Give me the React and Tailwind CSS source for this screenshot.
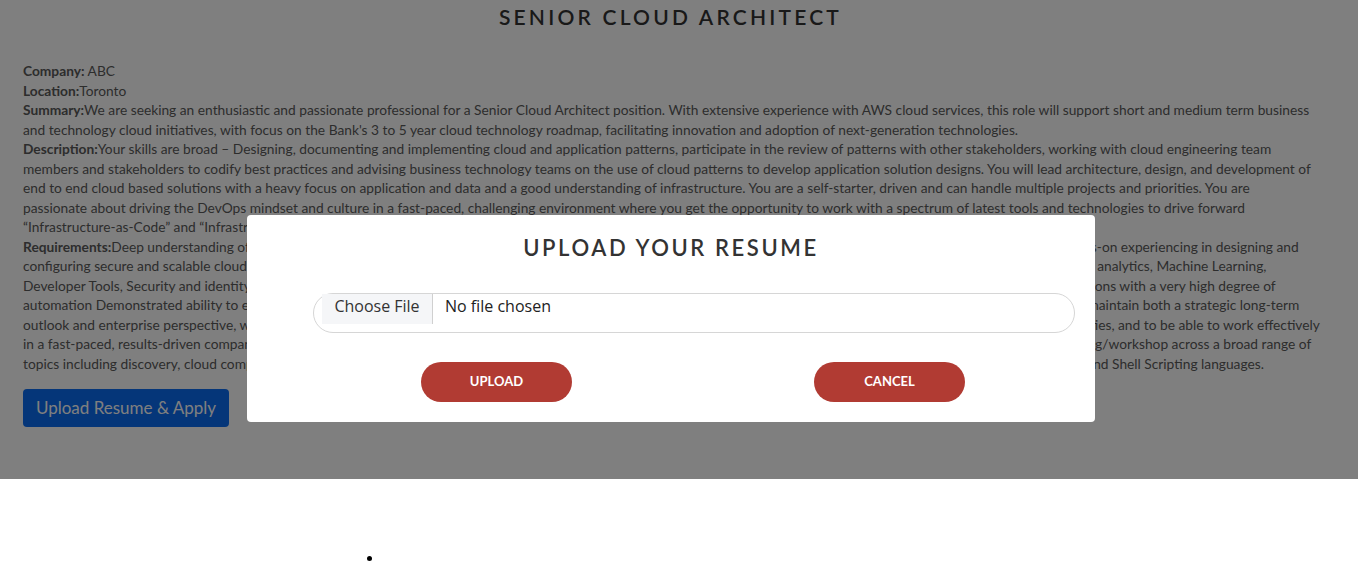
import React from 'react';

const summary = [
  "We are seeking an enthusiastic and passionate professional for a Senior Cloud Architect position. With extensive experience with AWS cloud services, this role will support short and medium term business",
  "and technology cloud initiatives, with focus on the Bank's 3 to 5 year cloud technology roadmap, facilitating innovation and adoption of next-generation technologies.",
];

const description = [
  "Your skills are broad – Designing, documenting and implementing cloud and application patterns, participate in the review of patterns with other stakeholders, working with cloud engineering team",
  "members and stakeholders to codify best practices and advising business technology teams on the use of cloud patterns to develop application solution designs. You will lead architecture, design, and development of",
  "end to end cloud based solutions with a heavy focus on application and data and a good understanding of infrastructure. You are a self-starter, driven and can handle multiple projects and priorities. You are",
  "passionate about driving the DevOps mindset and culture in a fast-paced, challenging environment where you get the opportunity to work with a spectrum of latest tools and technologies to drive forward",
  "“Infrastructure-as-Code” and “Infrastructure-as-a-Service”.",
];

const requirements = [
  "Deep understanding of AWS cloud services and architecture best practices across compute, storage, networks, databases and security, with at least 5 years of hands-on experiencing in designing and",
  "configuring secure and scalable cloud environments in AWS, along with working knowledge of the key services for compute, storage, containers, serverless, data lakes and big data analytics, Machine Learning,",
  "Developer Tools, Security and identity management, Networking and Content Delivery; proven track record of leading complex enterprise-scale cloud migrations and implementations with a very high degree of",
  "automation Demonstrated ability to engage with executive business and senior technology stakeholders, build consensus around cloud strategy and roadmaps, and to define and maintain both a strategic long-term",
  "outlook and enterprise perspective, while also delivering tactical and short-term solutions that meet the business needs; proven ability to manage multiple, often competing priorities, and to be able to work effectively",
  "in a fast-paced, results-driven company; strong communication skills and experiences leading customer-facing technical engagements, including whiteboarding sessions and training/workshop across a broad range of",
  "topics including discovery, cloud computing, migration, modernization, security, cost optimization and DevOps; strong hands-on proficiency in Python, Java, Node.js, PowerShell, and Shell Scripting languages.",
];

const Block = ({ label, lines }) => (
  <div>
    {lines.map((line, i) => (
      <div key={i} className="whitespace-nowrap">
        {i === 0 && <span className="font-bold">{label}</span>}
        {line}
      </div>
    ))}
  </div>
);

export default function App() {
  return (
    <div className="min-h-[561px] bg-white" style={{ fontFamily: 'Lato, "Open Sans", sans-serif' }}>
      <div className="relative h-[479px]">
        <div className="w-[1341px] px-[23px]">
          <h1 className="pt-[4px] text-center text-[21px] font-semibold leading-[26px] tracking-[3.2px] text-[#333]">
            SENIOR CLOUD ARCHITECT
          </h1>
          <div className="mt-[31px] text-[13.75px] leading-[19.5px] text-[#5a5a5a]">
            <div><span className="font-bold">Company:</span> ABC</div>
            <div><span className="font-bold">Location:</span>Toronto</div>
            <Block label="Summary:" lines={summary} />
            <Block label="Description:" lines={description} />
            <Block label="Requirements:" lines={requirements} />
          </div>
          <button className="mt-[16px] h-[38px] w-[206px] rounded-[4px] bg-[#0a6cf2] text-[17px] text-white">
            Upload Resume &amp; Apply
          </button>
        </div>

        <div className="absolute inset-0 bg-black/50">
          <div className="ml-[247px] mt-[215px] w-[848px] rounded-[4px] bg-white pb-[20px] pt-[20px]">
            <h2 className="text-center text-[22px] font-semibold leading-[26px] tracking-[2.6px] text-[#333]">
              UPLOAD YOUR RESUME
            </h2>
            <div
              className="ml-[66px] mr-[20px] mt-[32px] flex h-[40px] items-start rounded-full border border-[#d6d6d6] pl-[8px] text-[16px] font-medium leading-[20px]"
              style={{ fontFamily: '"Open Sans", sans-serif' }}
            >
              <span className="h-[30px] w-[111px] border-r border-[#d0d0d0] bg-[#f5f6f8] pt-[2px] text-center text-[#333]">
                Choose File
              </span>
              <span className="h-[30px] pl-[12px] pt-[2px] text-[#222]">
                No file chosen
              </span>
            </div>
            <div className="ml-[53px] mt-[29px] grid w-[786px] grid-cols-2">
              <div className="flex justify-center">
                <button className="h-[40px] w-[151px] rounded-full bg-[#b13b33] text-[13px] font-bold text-white">UPLOAD</button>
              </div>
              <div className="flex justify-center">
                <button className="h-[40px] w-[151px] rounded-full bg-[#b13b33] text-[13px] font-bold text-white">CANCEL</button>
              </div>
            </div>
          </div>
        </div>
      </div>

      <ul className="ml-[384px] mt-[69px] list-disc text-[16px] leading-[18px] text-black">
        <li>&nbsp;</li>
      </ul>
    </div>
  );
}
